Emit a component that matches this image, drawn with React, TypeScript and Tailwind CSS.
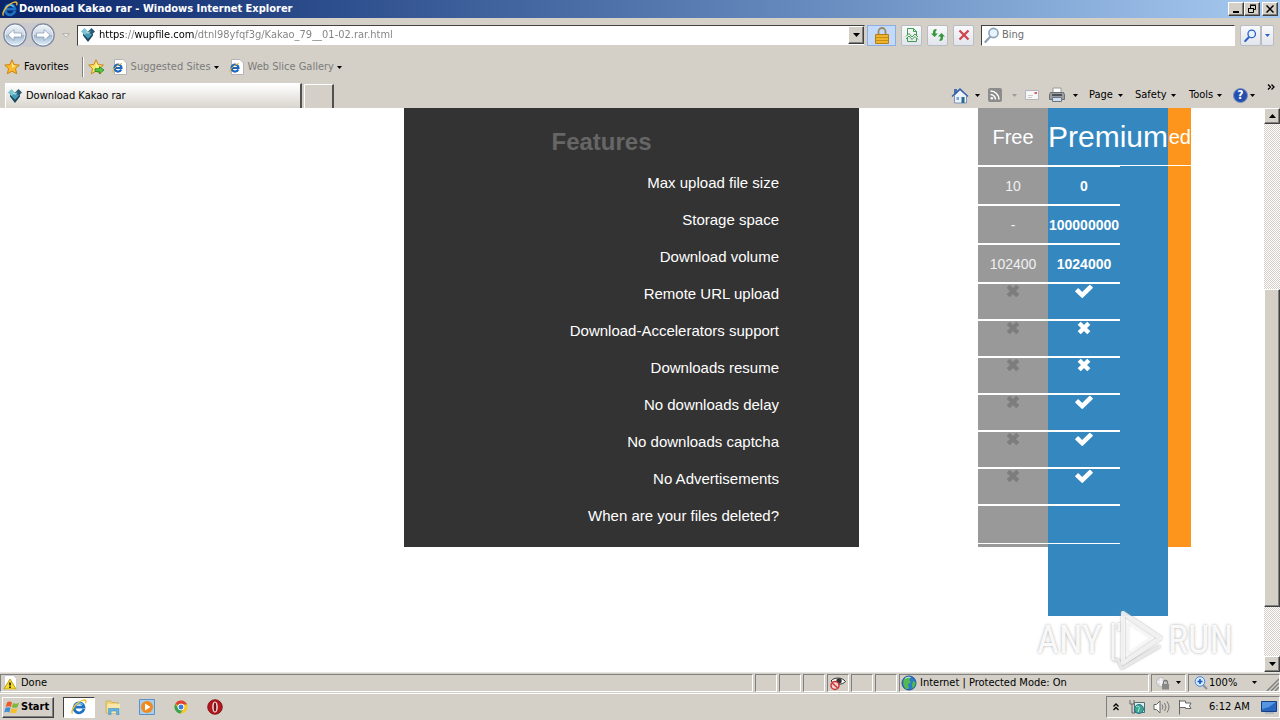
import type { ReactNode } from "react";

const SUNKEN = "border border-t-[#808080] border-l-[#808080] border-b-white border-r-white";
const RAISED =
  "border border-t-white border-l-white border-b-[#404040] border-r-[#404040] shadow-[inset_-1px_-1px_0_#808080] bg-[#d4d0c8]";

function Caret({ className = "text-black" }: { className?: string }) {
  return (
    <svg viewBox="0 0 5 3" className={`h-[3px] w-[5px] shrink-0 ${className}`} aria-hidden="true">
      <path d="M0 0h5L2.5 3z" fill="currentColor" />
    </svg>
  );
}

function IeLogo({ className = "size-4" }: { className?: string }) {
  return (
    <svg viewBox="0 0 16 16" className={`shrink-0 ${className}`} aria-hidden="true">
      <path d="M12.900 10A5 5 0 1 1 13 8.200H4.500" fill="none" stroke="#1d72c4" strokeWidth="2.800" />
      <path d="M3.800 6.800a4.500 4.500 0 0 1 7.800-1.200" fill="none" stroke="#6fc4f5" strokeWidth="1.200" />
      <path d="M1.600 14.600C-.5 12.600 3 6.500 8.300 3c3.200-2.200 6-2.400 6.500-1.200.3.800 0 1.700-.3 2.400" fill="none" stroke="#f0bd2c" strokeWidth="1.400" />
    </svg>
  );
}

function PageIe() {
  return (
    <svg viewBox="0 0 16 16" className="size-4 shrink-0" aria-hidden="true">
      <path d="M2.500.5H11L14.500 4v11.500h-12z" fill="#fff" stroke="#b5b5b5" />
      <path d="M9.200 10.500A3.500 3.500 0 1 1 9.500 9H3.500" fill="none" stroke="#1d66bd" strokeWidth="2.200" />
      <path d="M1 13.500C0 11 4.500 6 10 4.500" fill="none" stroke="#e9b52a" />
    </svg>
  );
}

function SiteLogo() {
  return (
    <svg viewBox="0 0 16 16" className="size-4 shrink-0" aria-hidden="true">
      <path d="M4.500 1 8 4.500 4.500 8 1 4.500z" fill="#7cc3d0" />
      <path d="M11.500 1 15 4.500 11.500 8 8 4.500z" fill="#2b5a75" />
      <path d="M8 4.500 11.500 8 8 11.500 4.500 8z" fill="#3b9db5" />
      <path d="M3 6.500 8 11.500 13 6.500v2L8 15 3 8.500z" fill="#164560" />
      <path d="M6 4.500 8 6.500l2-2" fill="none" stroke="#d6f2f7" />
    </svg>
  );
}

function Star({ add = false }: { add?: boolean }) {
  return (
    <svg viewBox="0 0 17 16" className="h-4 w-[17px] shrink-0" aria-hidden="true">
      <path d="m8 .8 2.200 4.800 5.200.5-3.900 3.500 1.200 5.200L8 12.200l-4.600 2.600 1.100-5.200L.7 6.100l5.200-.5z" fill={add ? "#fbe36a" : "#fbb92b"} stroke="#c98512" />
      <path d="m8 3 1.200 3.400 3 .4-4.200 2z" fill="#fff0a0" />
      {add && <path d="M7 9.800h4.500V7.500L16 11l-4.500 3.800v-2.300H7z" fill="#55c846" stroke="#23851f" strokeWidth=".8" />}
    </svg>
  );
}

function NavArrow({ label, flip = false }: { label: string; flip?: boolean }) {
  return (
    <button aria-label={label} className="size-6">
      <svg viewBox="0 0 24 24" className={flip ? "size-6 rotate-180" : "size-6"} aria-hidden="true">
        <defs>
          <linearGradient id={flip ? "navF" : "navB"} x1="0" y1={flip ? "1" : "0"} x2="0" y2={flip ? "0" : "1"}>
            <stop offset="0" stopColor="#f4f7fa" />
            <stop offset=".48" stopColor="#cbd7e4" />
            <stop offset=".52" stopColor="#a3b8cf" />
            <stop offset="1" stopColor="#dff1fd" />
          </linearGradient>
        </defs>
        <circle cx="12" cy="12" r="11" fill={flip ? "url(#navF)" : "url(#navB)"} stroke="#7d8aa0" strokeWidth="1.500" />
        <circle cx="12" cy="12" r="10" fill="none" stroke="#fff" strokeOpacity=".7" />
        <path d="m11 6.500-6 5.500 6 5.500v-3.500h7.500v-4H11z" fill="#fff" stroke="#8296b0" strokeWidth=".7" />
      </svg>
    </button>
  );
}

function Magnifier({ className, color }: { className: string; color: string }) {
  return (
    <svg viewBox="0 0 16 16" className={`shrink-0 ${className}`} aria-hidden="true">
      <path d="M6.500 9.500 1.500 14.800" stroke={color} strokeWidth="2.400" strokeLinecap="round" />
      <circle cx="9.500" cy="6" r="4.600" fill="#e6f3fd" stroke={color} strokeWidth="1.600" />
    </svg>
  );
}

function ToolButton({ label, className = "w-[21px]", children }: { label: string; className?: string; children: ReactNode }) {
  return (
    <button
      aria-label={label}
      className={`flex h-[21px] items-center justify-center rounded-xs border border-[#b9bcc2] bg-linear-to-b from-[#f8f9fb] to-[#e2e5ec] ${className}`}
    >
      {children}
    </button>
  );
}

function TitleBar() {
  return (
    <header className="flex h-[18px] shrink-0 items-center gap-px bg-linear-to-r from-[#0a246a] to-[#a6caf0] px-[2px] text-white">
      <IeLogo />
      <h1 className="grow font-bold">Download Kakao rar - Windows Internet Explorer</h1>
      <div className="flex text-black">
        <button aria-label="Minimize" className={`flex h-[14px] w-4 items-end justify-center pb-[2px] ${RAISED}`}>
          <span className="h-[2px] w-[6px] bg-black" />
        </button>
        <button aria-label="Restore" className={`flex h-[14px] w-4 items-center justify-center ${RAISED}`}>
          <svg viewBox="0 0 10 10" className="size-[10px]" aria-hidden="true">
            <path d="M3.500 4V1.500h5v4H6M3 1h6M1.500 4.500h5v4h-5zM1 4.500h6" fill="none" stroke="#000" />
          </svg>
        </button>
        <button aria-label="Close" className={`ml-[2px] flex h-[14px] w-4 items-center justify-center ${RAISED}`}>
          <svg viewBox="0 0 8 8" className="size-2" aria-hidden="true">
            <path d="m.5.5 7 7m0-7-7 7" stroke="#000" strokeWidth="1.500" />
          </svg>
        </button>
      </div>
    </header>
  );
}

function AddressRow() {
  return (
    <div className="flex h-[34px] shrink-0 items-center pr-[6px] pl-[3px]">
      <div className="flex gap-1 rounded-full bg-[#c9c9ce]">
        <NavArrow label="Back" />
        <NavArrow label="Forward" flip />
      </div>
      <button aria-label="Recent pages" className="flex w-[22px] justify-center">
        <svg viewBox="0 0 8 5" className="h-[5px] w-2" aria-hidden="true">
          <path d="M.7.7h6.600L4 4.300z" fill="#eee" stroke="#a3a3a3" strokeWidth=".8" />
        </svg>
      </button>
      <label className="flex h-[21px] grow items-center border border-t-[#404040] border-l-[#404040] border-b-[#d4d0c8] border-r-[#d4d0c8] bg-white pl-[2px]">
        <SiteLogo />
        <input
          aria-label="Address"
          defaultValue="https://wupfile.com/dtnl98yfqf3g/Kakao_79__01-02.rar.html"
          className="ml-[3px] min-w-0 grow bg-[linear-gradient(90deg,#000_26px,#808080_26px,#808080_36px,#000_36px,#000_95px,#808080_95px)] bg-clip-text text-transparent outline-none"
        />
        <button aria-label="Show address list" className={`flex h-[18px] w-4 items-center justify-center ${RAISED}`}>
          <svg viewBox="0 0 7 4" className="h-1 w-[7px]" aria-hidden="true">
            <path d="M0 0h7L3.500 4z" />
          </svg>
        </button>
      </label>
      <button aria-label="Security report" className="ml-[2px] flex h-[21px] w-[29px] items-center justify-center border border-[#8caee0] bg-[#c3dafc]">
        <svg viewBox="0 0 16 17" className="h-[17px] w-4" aria-hidden="true">
          <path d="M4.500 8V4.500a3.500 3.500 0 0 1 7 0V8" fill="none" stroke="#9a8b60" strokeWidth="1.800" />
          <path d="M1.500 7.500h13v9h-13z" fill="#eeb42c" stroke="#b57f13" />
          <path d="M2 10.500h12M2 13.500h12" stroke="#c98e18" />
        </svg>
      </button>
      <div className="ml-[5px] flex gap-[5px]">
        <ToolButton label="Compatibility view">
          <svg viewBox="0 0 14 16" className="h-4 w-[14px]" aria-hidden="true">
            <path d="M2.500 8V1.500h6l3 3V8M2.500 11v3.500h9V11M8.500 1.500v3h3" fill="none" stroke="#3f9e4c" />
            <path d="m1 9.500 3-3L7 10l3-3 3 3M1 12l3-3 3 3.500L10 9.500l3 3" fill="none" stroke="#3f9e4c" />
          </svg>
        </ToolButton>
        <ToolButton label="Refresh">
          <svg viewBox="0 0 16 14" className="h-[14px] w-4" aria-hidden="true">
            <path d="M6.500 1v1.500Q5.500 2.500 5.500 4v1.500H8L4.500 9 1 5.500h2V4q0-3 3.500-3zM9.500 13v-1.500q1 0 1-1.500V8.500H8L11.500 5 15 8.500h-2V10q0 3-3.500 3z" fill="#35973c" />
          </svg>
        </ToolButton>
        <ToolButton label="Stop">
          <svg viewBox="0 0 12 12" className="size-3" aria-hidden="true">
            <path d="m1.500 1.500 9 9m0-9-9 9" stroke="#d0454d" strokeWidth="2.300" />
          </svg>
        </ToolButton>
      </div>
      <label className="ml-[7px] flex h-[21px] w-[254px] shrink-0 items-center border border-t-[#404040] border-l-[#404040] border-b-white border-r-white bg-white pl-[2px]">
        <Magnifier className="size-4" color="#8ea3b8" />
        <input aria-label="Search" placeholder="Bing" className="ml-[2px] min-w-0 grow outline-none placeholder:text-[#6d6d6d]" />
      </label>
      <div className="ml-[5px] flex">
        <ToolButton label="Run search">
          <Magnifier className="size-[13px]" color="#2a61c9" />
        </ToolButton>
        <ToolButton label="Search options" className="w-[13px]">
          <Caret className="text-[#2a61c9]" />
        </ToolButton>
      </div>
    </div>
  );
}

function FavoritesRow() {
  return (
    <nav aria-label="Favorites" className="flex h-[30px] shrink-0 items-center pl-1">
      <button className="flex items-center gap-[3px]">
        <Star />
        Favorites
      </button>
      <span className="mr-1 ml-[13px] h-5 w-[2px] border-l border-[#808080] bg-white" />
      <button aria-label="Add to Favorites Bar">
        <Star add />
      </button>
      <button className="ml-[7px] flex items-center text-[#7b7b7b]">
        <PageIe />
        <span className="mr-[3px] ml-[3px]">Suggested Sites</span>
        <Caret />
      </button>
      <button className="ml-[10px] flex items-center text-[#7b7b7b]">
        <PageIe />
        <span className="mr-[3px] ml-[3px]">Web Slice Gallery</span>
        <Caret />
      </button>
    </nav>
  );
}

function CommandBar() {
  return (
    <div className="flex items-center">
      <button aria-label="Home" className="flex w-[37px] items-center gap-[6px]">
        <svg viewBox="0 0 18 17" className="h-[17px] w-[18px]" aria-hidden="true">
          <path d="M3 2h3v5H3z" fill="#4a6fb5" />
          <path d="M3.500 8.500 9 3l6.500 5.500v7.500h-12z" fill="#eef3fa" stroke="#7f93b6" />
          <path d="M1 9.500 9 2l8 7.500" fill="none" stroke="#3961ad" strokeWidth="1.500" />
          <path d="M5.500 10H8v3H5.500z" fill="#77a6dd" />
          <path d="M10.500 10h3v6h-3z" fill="#2d6793" />
        </svg>
        <Caret />
      </button>
      <button aria-label="Feeds" className="flex w-[37px] items-center gap-[10px]">
        <svg viewBox="0 0 14 14" className="size-[14px]" aria-hidden="true">
          <rect width="14" height="14" rx="2" fill="#8c8c8c" />
          <circle cx="3.800" cy="10.300" r="1.300" fill="#fff" />
          <path d="M2.500 6.500a5 5 0 0 1 5 5M2.500 3a8.500 8.500 0 0 1 8.500 8.500" fill="none" stroke="#fff" strokeWidth="1.500" />
        </svg>
        <Caret className="text-[#9b9b9b]" />
      </button>
      <button aria-label="Read mail" className="w-[24px]">
        <svg viewBox="0 0 14 10" className="h-[10px] w-[14px]" aria-hidden="true">
          <path d="M.5.5h13v9H.5z" fill="#f7f7f7" stroke="#b4b4bc" />
          <path d="M9.500 2h2.500v2H9.500z" fill="#d4606a" />
          <path d="M3 5.500h5M3 7.500h4" stroke="#ccc" />
        </svg>
      </button>
      <button aria-label="Print" className="flex w-[40px] items-center gap-2">
        <svg viewBox="0 0 16 16" className="size-4" aria-hidden="true">
          <path d="M4 1h8v6H4z" fill="#fff" stroke="#9a9a9a" />
          <path d="M1.500 5.500h13l1 2v5H.5v-5z" fill="#9a9da1" stroke="#6b6f74" />
          <path d="M3 8h10" stroke="#34383c" strokeWidth="1.500" />
          <path d="M3.500 10.500h9v4h-9z" fill="#cfe0f2" stroke="#6c7681" />
        </svg>
        <Caret />
      </button>
      <button className="flex w-[46px] items-center gap-[5px]">
        Page <Caret />
      </button>
      <button className="flex w-[54px] items-center gap-[4px]">
        Safety <Caret />
      </button>
      <button className="flex w-[44px] items-center gap-[4px]">
        Tools <Caret />
      </button>
      <button aria-label="Help" className="flex w-[28px] items-center gap-[2px]">
        <span className="flex size-[15px] items-center justify-center rounded-full border border-[#7c91bd] bg-[#244fae] text-[12px] leading-none font-bold text-white">?</span>
        <Caret />
      </button>
      <button aria-label="More commands" className="self-start pt-[2px] pr-[5px] pl-[6px]">
        <svg viewBox="0 0 8 6" className="h-[6px] w-2" aria-hidden="true">
          <path d="m1 .5 2.500 2.500L1 5.500M4.500.5 7 3 4.500 5.500" fill="none" stroke="#000" strokeWidth="1.300" />
        </svg>
      </button>
    </div>
  );
}

function TabRow() {
  return (
    <div className="flex h-[26px] shrink-0 justify-between pl-[5px]">
      <div className="flex items-end">
        <button className="flex h-[25px] w-[297px] items-center gap-[3px] border-t border-r-2 border-l border-t-white border-r-[#505050] border-l-white bg-linear-to-b from-white to-[#d9d5ce] pl-px">
          <SiteLogo />
          Download Kakao rar
        </button>
        <button aria-label="New tab" className="ml-[2px] h-6 w-[30px] border-t border-r-2 border-l border-t-white border-r-[#505050] border-l-white" />
      </div>
      <CommandBar />
    </div>
  );
}

const FEATURES = [
  "Max upload file size",
  "Storage space",
  "Download volume",
  "Remote URL upload",
  "Download-Accelerators support",
  "Downloads resume",
  "No downloads delay",
  "No downloads captcha",
  "No Advertisements",
  "When are your files deleted?",
];

const LIMITS = [
  ["10", "0"],
  ["-", "100000000"],
  ["102400", "1024000"],
];

const PERKS = [true, false, false, true, true, true];

function Cross({ className = "" }: { className?: string }) {
  return (
    <svg viewBox="0 0 14 14" className={`mx-auto size-[14px] ${className}`} role="img" aria-label="No">
      <path d="m2.200 2.200 9.600 9.600m0-9.600-9.600 9.600" stroke="currentColor" strokeWidth="4.400" />
    </svg>
  );
}

function Check() {
  return (
    <svg viewBox="0 0 18 14" className="mx-auto h-[14px] w-[18px]" role="img" aria-label="Yes">
      <path d="M.4 6.700 2.600 4.500a.8.8 0 0 1 1.100 0l3.500 3.400L14.300.9a.8.8 0 0 1 1.100 0l2.200 2.200a.8.8 0 0 1 0 1.100L7.800 13.700a.8.8 0 0 1-1.100 0L.4 7.800a.8.8 0 0 1 0-1.100z" fill="currentColor" />
    </svg>
  );
}

function Plans() {
  return (
    <section aria-label="Plans" className="grid grid-cols-[70px_120px_23px] grid-rows-[439px_69px] text-white">
      <div className="col-start-1 row-start-1 bg-[#999]" />
      <div className="col-start-2 row-span-2 row-start-1 bg-[#3588bf]">
        <div className="h-[58px] border-b border-white" />
      </div>
      <div className="col-start-3 row-start-1 bg-[#fd941c]">
        <h3 className="flex h-[58px] items-center justify-end border-b border-white text-[20px]">ed</h3>
      </div>
      <table className="col-span-2 col-start-1 row-start-1 w-[142px] table-fixed border-collapse self-start text-center text-[14px]">
        <colgroup>
          <col className="w-[70px]" />
          <col className="w-[72px]" />
        </colgroup>
        <thead>
          <tr className="h-[58px] border-b-2 border-white">
            <th className="p-0 text-[20px] font-normal">Free</th>
            <th className="p-0 text-left text-[30px] leading-none font-normal whitespace-nowrap">Premium</th>
          </tr>
        </thead>
        <tbody>
          {LIMITS.map(([free, premium]) => (
            <tr key={premium} className="h-[39px] border-b-2 border-white">
              <td className="p-0 text-[#f0f0f0]">{free}</td>
              <td className="p-0 font-bold">{premium}</td>
            </tr>
          ))}
          {PERKS.map((included, i) => (
            <tr key={i} className="h-[37px] border-b-2 border-white">
              <td className="p-0 align-top">
                <Cross className="text-[#7d7d7d]" />
              </td>
              <td className="p-0 align-top">{included ? <Check /> : <Cross />}</td>
            </tr>
          ))}
          <tr className="h-[38px] border-b border-white">
            <td />
            <td />
          </tr>
        </tbody>
      </table>
    </section>
  );
}

function ScrollBar() {
  return (
    <div className="flex w-4 shrink-0 flex-col bg-[conic-gradient(#fff_25%,#d4d0c8_0_50%,#fff_0_75%,#d4d0c8_0)] bg-[length:2px_2px]">
      <button aria-label="Scroll up" className={`flex h-4 items-center justify-center ${RAISED}`}>
        <svg viewBox="0 0 7 4" className="h-1 w-[7px]" aria-hidden="true">
          <path d="M0 4h7L3.500 0z" />
        </svg>
      </button>
      <div className="grow-[166]" />
      <div className={`grow-[317] ${RAISED}`} />
      <div className="grow-[49]" />
      <button aria-label="Scroll down" className={`flex h-4 items-center justify-center ${RAISED}`}>
        <svg viewBox="0 0 7 4" className="h-1 w-[7px]" aria-hidden="true">
          <path d="M0 0h7L3.500 4z" />
        </svg>
      </button>
    </div>
  );
}

function Watermark() {
  return (
    <div className="absolute right-[31px] bottom-0 flex h-[64px] items-center gap-[3px] font-['Roboto_Condensed','Open_Sans_Condensed','Liberation_Sans',sans-serif] text-[38px] leading-none text-white/90 [text-shadow:0_0_3px_#aaa]">
      <span>ANY</span>
      <svg viewBox="0 0 60 64" className="h-[64px] w-[60px] drop-shadow-[0_0_1px_#999]" aria-hidden="true">
        <path d="M8 15v37M14 15v8" fill="none" stroke="#fff" strokeOpacity=".85" strokeWidth="3" />
        <path d="M8 52h5l4 8 38-22" fill="none" stroke="#f3f3f3" strokeOpacity=".8" strokeWidth="3" />
        <path d="M18 5v50l37-25z" fill="none" stroke="#fff" strokeOpacity=".8" strokeWidth="4" strokeLinejoin="round" />
        <path d="M23 15v31l23-16z" fill="none" stroke="#fff" strokeOpacity=".4" />
      </svg>
      <span>RUN</span>
    </div>
  );
}

function WebPage() {
  return (
    <div className="flex min-h-0 grow">
      <main className="relative flex min-w-0 grow items-start justify-end overflow-hidden bg-white pr-[73px] font-['Liberation_Sans',sans-serif]">
        <section className="mr-[119px] h-[439px] w-[455px] bg-[#333] pr-20 text-right text-[15px] text-white">
          <h2 className="-mr-5 flex h-14 items-end justify-center pt-5 pb-2 text-[24px] leading-7 font-bold text-[#666]">
            <span>Features</span>
          </h2>
          <ul>
            {FEATURES.map((feature) => (
              <li key={feature} className="flex h-[37px] items-center justify-end">
                {feature}
              </li>
            ))}
          </ul>
        </section>
        <Plans />
        <Watermark />
      </main>
      <ScrollBar />
    </div>
  );
}

function StatusBar() {
  return (
    <footer className="flex h-[21px] shrink-0 items-center gap-[2px] border-t border-[#e8e6e1] pb-px">
      <div className={`flex h-[18px] grow items-center gap-[3px] pl-[2px] ${SUNKEN}`}>
        <svg viewBox="0 0 15 16" className="h-4 w-[15px]" aria-hidden="true">
          <path d="M1.500.5h9l3 3v12h-12z" fill="#fff" stroke="#ccc" />
          <path d="M7 4 13 14H1z" fill="#f8dc29" stroke="#bd9d15" />
          <path d="M7 7.500v3m0 1v1.500" stroke="#000" strokeWidth="1.500" />
        </svg>
        Done
      </div>
      <div className={`h-[18px] w-[22px] ${SUNKEN}`} />
      <div className={`h-[18px] w-[22px] ${SUNKEN}`} />
      <div className={`h-[18px] w-[22px] ${SUNKEN}`} />
      <div className={`flex h-[18px] w-[22px] items-center justify-center ${SUNKEN}`}>
        <svg viewBox="0 0 18 16" className="h-4 w-[18px]" role="img" aria-label="Privacy report">
          <path d="M2 6C5 2 13 2 16.500 6.500 13 10.500 6 10 2 6z" fill="#fff" stroke="#333" />
          <circle cx="10" cy="6" r="2.700" fill="#333" />
          <circle cx="6" cy="10.500" r="4" fill="#f6cfcf" stroke="#c63838" strokeWidth="1.500" />
          <path d="m3.200 8 5.500 5" stroke="#c63838" strokeWidth="1.500" />
        </svg>
      </div>
      <div className={`h-[18px] w-[22px] ${SUNKEN}`} />
      <div className={`h-[18px] w-[22px] ${SUNKEN}`} />
      <div className={`flex h-[18px] w-[250px] items-center gap-[3px] pl-px ${SUNKEN}`}>
        <svg viewBox="0 0 16 16" className="size-4" aria-hidden="true">
          <circle cx="8" cy="8" r="7" fill="#2b79ce" stroke="#1b4f94" />
          <path d="M3 4c2-2.500 6-2.500 7-1.500L8 5l2 2-3 2.500L8 13l-2 1.500C3 13 1.500 9 3 4zM12 6l2.500 1c.3 3-1 5-3 6.500L11 10z" fill="#55b94c" />
          <path d="M4 3.500C6 2 8 2 9.500 2.500" stroke="#c9efff" fill="none" />
        </svg>
        Internet | Protected Mode: On
      </div>
      <button aria-label="Security zone" className={`flex h-[18px] w-[35px] items-center justify-center gap-[6px] ${SUNKEN}`}>
        <svg viewBox="0 0 14 14" className="size-[14px]" aria-hidden="true">
          <circle cx="5" cy="6" r="4.500" fill="#ddd" stroke="#bbb" />
          <path d="M5 2v8M1 6h8" stroke="#fff" />
          <path d="M7.500 8V6.500a2 2 0 0 1 4 0V8" fill="none" stroke="#777" strokeWidth="1.300" />
          <path d="M6 8h7v5.500H6z" fill="#888" />
        </svg>
        <Caret />
      </button>
      <div className={`flex h-[18px] w-[92px] items-center justify-between pl-[5px] ${SUNKEN}`}>
        <button className="flex w-[63px] items-center gap-px">
          <svg viewBox="0 0 14 14" className="size-[14px] shrink-0" aria-hidden="true">
            <path d="m9 9 4 4" stroke="#8d93a0" strokeWidth="2.200" />
            <circle cx="6" cy="5.500" r="4.800" fill="#d8ecff" stroke="#3f83d8" />
            <path d="M6 3v5M3.500 5.500h5" stroke="#1454b8" strokeWidth="1.600" />
          </svg>
          <span className="grow text-left">100%</span>
          <Caret />
        </button>
        <svg viewBox="0 0 13 13" className="size-[13px] self-end" aria-hidden="true">
          <path d="M1 13 13 1M5 13l8-8M9 13l4-4" stroke="#808080" strokeWidth="1.500" />
        </svg>
      </div>
    </footer>
  );
}

function Taskbar() {
  return (
    <footer className="flex h-[27px] shrink-0 items-center border-t border-white pl-[2px]">
      <button className={`flex h-[21px] w-[52px] items-center gap-px pl-px font-bold ${RAISED}`}>
        <svg viewBox="0 0 16 15" className="h-[15px] w-4 shrink-0" aria-hidden="true">
          <path d="M3 2.500C5 1 6.500 1.500 8 2.500L6.800 7C5 6 3.500 6 1.700 7z" fill="#ed5a2b" />
          <path d="M9 3c2 1 4 .8 6-.3L13.700 7c-2 1.200-4 1-6 .2z" fill="#7fb83c" />
          <path d="M1.400 8C3.300 7 5 7 6.500 8l-1.200 4.500C3.500 11.500 2 11.500.2 12.500z" fill="#3c8ed6" />
          <path d="M7.500 8.300c2 1 4 .8 5.900-.3l-1.200 4.500c-2 1-4 1-6 .2z" fill="#f7bf2b" />
        </svg>
        Start
      </button>
      <nav aria-label="Taskbar" className="ml-[9px] flex items-center">
        <button aria-label="Internet Explorer" className="flex h-[21px] w-8 items-center justify-center border border-t-[#404040] border-l-[#404040] border-b-white border-r-white bg-white">
          <IeLogo />
        </button>
        <button aria-label="Explorer" className="ml-[10px]">
          <svg viewBox="0 0 16 16" className="size-4" aria-hidden="true">
            <path d="M1 2h5l1 1.500h6V14H1z" fill="#efd27b" stroke="#c9a852" strokeWidth=".7" />
            <path d="M2.500 5H15v9H2.500z" fill="#f8e7a9" />
            <path d="M3.500 15.500V9.500h10.500v6h-2.500v-3.500H6v3.500z" fill="#62b4e2" stroke="#3f8dc2" strokeWidth=".6" />
          </svg>
        </button>
        <button aria-label="Media Player" className="ml-[18px]">
          <svg viewBox="0 0 16 16" className="size-4" aria-hidden="true">
            <path d="M.5.5h15v15H.5z" fill="#a9cdec" stroke="#5793c9" />
            <circle cx="8" cy="8" r="6" fill="#f08a1e" />
            <path d="M6 4.500 11.500 8 6 11.500z" fill="#fff" />
          </svg>
        </button>
        <button aria-label="Chrome" className="ml-[18px]">
          <svg viewBox="0 0 16 16" className="size-4" aria-hidden="true">
            <circle cx="8" cy="8" r="6.500" fill="#fbc91d" />
            <path d="M8 8 2.300 4.800A6.500 6.500 0 0 1 14 5.500H8z" fill="#dd4236" />
            <path d="M2.300 4.800A6.500 6.500 0 0 0 7.500 14.500L10.500 9.500 5.500 9.500z" fill="#38a352" />
            <circle cx="8" cy="8" r="3" fill="#3c7de0" stroke="#fff" />
          </svg>
        </button>
        <button aria-label="Opera" className="ml-[18px]">
          <svg viewBox="0 0 16 16" className="size-4" aria-hidden="true">
            <circle cx="8" cy="8" r="7.300" fill="#b3161c" stroke="#75090d" strokeWidth=".8" />
            <ellipse cx="8" cy="8" rx="2.800" ry="5.500" fill="#f1e2e2" />
            <ellipse cx="8" cy="8" rx="1.300" ry="4.500" fill="#7b1115" />
          </svg>
        </button>
      </nav>
      <div className={`ml-auto flex h-[22px] w-[174px] items-center pr-[2px] pl-[6px] ${SUNKEN}`}>
        <button aria-label="Show hidden icons">
          <svg viewBox="0 0 6 8" className="h-2 w-[6px]" aria-hidden="true">
            <path d="M.5 3.500 3 1l2.500 2.500M.5 7 3 4.500 5.500 7" fill="none" stroke="#000" strokeWidth="1.300" />
          </svg>
        </button>
        <svg viewBox="0 0 16 16" className="ml-[10px] size-4 shrink-0" role="img" aria-label="Network">
          <path d="M5.500 3.500h10v10h-10z" fill="#e3f1f0" stroke="#4c6f70" />
          <circle cx="10" cy="10" r="4.500" fill="#3aa694" stroke="#2d6f8f" />
          <path d="M7 8c2-2 4 0 3 2l-1 3" stroke="#b9efd0" fill="none" />
          <path d="M1 1v4h4V1M3 5v9h3" fill="none" stroke="#666" />
        </svg>
        <svg viewBox="0 0 17 16" className="ml-2 h-4 w-[17px] shrink-0" role="img" aria-label="Volume">
          <path d="M1 5.500h2.500L7 2v12l-3.500-3.500H1z" fill="#fff" stroke="#666" />
          <path d="M9 5.500q2 2.500 0 5M11.500 4q3 4 0 8M14 2.500q4 5.500 0 11" fill="none" stroke="#777" />
        </svg>
        <svg viewBox="0 0 16 16" className="ml-[7px] size-4 shrink-0" role="img" aria-label="Action center">
          <path d="M2.500 1v14.500M2.500 2h6v2H14l-1.500 3L14 9.500H8.500v-1h-6" fill="#fff" stroke="#666" />
        </svg>
        <time className="ml-4">6:12 AM</time>
        <svg viewBox="0 0 16 14" className="ml-auto h-[14px] w-4 shrink-0" role="img" aria-label="Show desktop">
          <path d="M.5 1.500h15v10H.5z" fill="#2867c0" stroke="#193f80" />
          <path d="M1 2h14L8 7 1 9z" fill="#5695e2" />
          <path d="M4 13h9" stroke="#8aa0bc" />
        </svg>
      </div>
    </footer>
  );
}

export default function App() {
  return (
    <div className="flex h-screen flex-col overflow-hidden bg-[#d4d0c8] font-['DejaVu_Sans_Condensed','DejaVu_Sans',sans-serif] text-[11px] leading-[14px] whitespace-nowrap text-black">
      <TitleBar />
      <AddressRow />
      <FavoritesRow />
      <TabRow />
      <WebPage />
      <StatusBar />
      <Taskbar />
    </div>
  );
}
